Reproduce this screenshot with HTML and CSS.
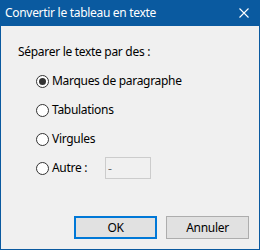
FILE: index.html
```html
<!DOCTYPE html>
<html>
<head>
  <meta charset="utf-8"/>
  <title>Convertir le tableau en texte</title>
  <link rel="stylesheet" href="styles.css">
</head>
<body>

  <!-- ---------- DIALOG WINDOW ---------- -->
  <div class="window">
    <!-- Title bar -->
    <div class="titlebar">
      <span class="title">Convertir le tableau en texte</span>
      <svg class="close" width="10" height="10" viewBox="0 0 10 10">
        <path d="M0.5 0.5 L9.5 9.5 M9.5 0.5 L0.5 9.5" stroke="#fff" stroke-width="1.1" fill="none"/>
      </svg>
    </div>

    <!-- Body -->
    <div class="content">
      <div class="group-label">Séparer le texte par des :</div>

      <div class="options">
        <label class="option">
          <input type="radio" name="sep" checked/>
          <span>Marques de paragraphe</span>
        </label>
        <label class="option">
          <input type="radio" name="sep"/>
          <span>Tabulations</span>
        </label>
        <label class="option">
          <input type="radio" name="sep"/>
          <span>Virgules</span>
        </label>
        <label class="option">
          <input type="radio" name="sep"/>
          <span class="other-label">Autre :</span>
          <input type="text" class="other-input" value="-" disabled/>
        </label>
      </div>

      <!-- Buttons -->
      <div class="buttons">
        <button type="button" class="btn btn-default">OK</button>
        <button type="button" class="btn">Annuler</button>
      </div>
    </div>
  </div>

</body>
</html>
```

FILE: styles.css
```css
/* Basic reset */
* {
  box-sizing: border-box;
  margin: 0;
  padding: 0;
}
body {
  font-family: "Noto Sans", "Liberation Sans", sans-serif;
  font-size: 12px;
  letter-spacing: -0.3px;
  color: #000;
  background: #f0f0f0;
}

/* ---------- WINDOW ---------- */
.window {
  width: 260px;
  height: 250px;
  border: 1px solid #0a5aa0;
  border-top: none;
  background: #f0f0f0;
  display: flex;
  flex-direction: column;
}
.titlebar {
  height: 26px;
  background: #0a5aa0;
  display: flex;
  align-items: center;
  justify-content: space-between;
  padding: 0 10px 1px 4px;
  color: #fff;
}
.title {
  font-size: 12px;
  line-height: 16px;
}
.close {
  display: block;
}

/* ---------- CONTENT ---------- */
.content {
  flex: 1;
  display: flex;
  flex-direction: column;
  padding: 18px 10px 10px 17px;
}
.group-label {
  line-height: 16px;
}
.options {
  margin-top: 10px;
  margin-left: 18px;
  display: flex;
  flex-direction: column;
  gap: 7px;
}
.option {
  height: 22px;
  display: flex;
  align-items: center;
  line-height: 16px;
}
.option input[type="radio"] {
  appearance: none;
  width: 13px;
  height: 13px;
  border: 1px solid #333;
  border-radius: 50%;
  background: #fff;
  margin-right: 3px;
  position: relative;
}
.option input[type="radio"]:checked::after {
  content: "";
  position: absolute;
  left: 2px;
  top: 2px;
  width: 7px;
  height: 7px;
  border-radius: 50%;
  background: #333;
}
.other-label {
  width: 53px;
}
.other-input {
  width: 46px;
  height: 22px;
  border: 1px solid #ccc;
  background: #f0f0f0;
  color: #6d6d6d;
  font-family: inherit;
  font-size: 12px;
  padding: 0 2px;
}

/* ---------- BUTTONS ---------- */
.buttons {
  margin-top: auto;
  display: flex;
  justify-content: flex-end;
  gap: 9px;
}
.btn {
  width: 83px;
  height: 23px;
  background: #e1e1e1;
  border: 1px solid #adadad;
  font-family: inherit;
  font-size: 12px;
  letter-spacing: -0.3px;
  color: #000;
}
.btn-default {
  border: 2px solid #0078d7;
}
```
